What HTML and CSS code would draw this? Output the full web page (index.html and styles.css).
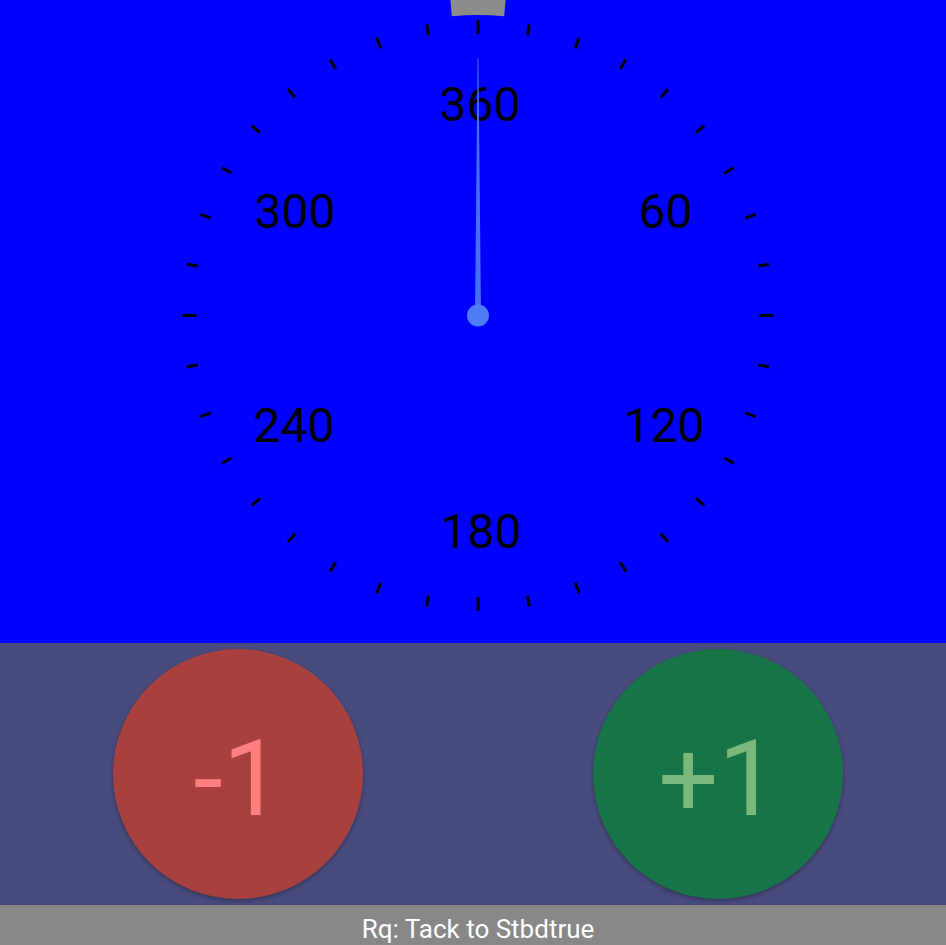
FILE: index.html
```html
<!DOCTYPE html>
<html>
<head>
<meta charset="utf-8">
<link rel="stylesheet" href="styles.css">
</head>
<body>
<div class="app">
  <div class="dial-area">
    <svg class="dial" width="946" height="643" viewBox="0 0 946 643">
      <path class="tab" d="M 451.85 16.14 A 300 300 0 0 1 504.15 16.14 L 508.5 -33.7 A 350 350 0 0 0 447.5 -33.7 Z"/>
      <g class="ticks">
        <line class="major" x1="478" y1="20" x2="478" y2="34" transform="rotate(0 478 315.5)"/>
        <line x1="478" y1="20" x2="478" y2="31" transform="rotate(10 478 315.5)"/>
        <line x1="478" y1="20" x2="478" y2="31" transform="rotate(20 478 315.5)"/>
        <line x1="478" y1="20" x2="478" y2="31" transform="rotate(30 478 315.5)"/>
        <line x1="478" y1="20" x2="478" y2="31" transform="rotate(40 478 315.5)"/>
        <line x1="478" y1="20" x2="478" y2="31" transform="rotate(50 478 315.5)"/>
        <line x1="478" y1="20" x2="478" y2="31" transform="rotate(60 478 315.5)"/>
        <line x1="478" y1="20" x2="478" y2="31" transform="rotate(70 478 315.5)"/>
        <line x1="478" y1="20" x2="478" y2="31" transform="rotate(80 478 315.5)"/>
        <line class="major" x1="478" y1="20" x2="478" y2="34" transform="rotate(90 478 315.5)"/>
        <line x1="478" y1="20" x2="478" y2="31" transform="rotate(100 478 315.5)"/>
        <line x1="478" y1="20" x2="478" y2="31" transform="rotate(110 478 315.5)"/>
        <line x1="478" y1="20" x2="478" y2="31" transform="rotate(120 478 315.5)"/>
        <line x1="478" y1="20" x2="478" y2="31" transform="rotate(130 478 315.5)"/>
        <line x1="478" y1="20" x2="478" y2="31" transform="rotate(140 478 315.5)"/>
        <line x1="478" y1="20" x2="478" y2="31" transform="rotate(150 478 315.5)"/>
        <line x1="478" y1="20" x2="478" y2="31" transform="rotate(160 478 315.5)"/>
        <line x1="478" y1="20" x2="478" y2="31" transform="rotate(170 478 315.5)"/>
        <line class="major" x1="478" y1="20" x2="478" y2="34" transform="rotate(180 478 315.5)"/>
        <line x1="478" y1="20" x2="478" y2="31" transform="rotate(190 478 315.5)"/>
        <line x1="478" y1="20" x2="478" y2="31" transform="rotate(200 478 315.5)"/>
        <line x1="478" y1="20" x2="478" y2="31" transform="rotate(210 478 315.5)"/>
        <line x1="478" y1="20" x2="478" y2="31" transform="rotate(220 478 315.5)"/>
        <line x1="478" y1="20" x2="478" y2="31" transform="rotate(230 478 315.5)"/>
        <line x1="478" y1="20" x2="478" y2="31" transform="rotate(240 478 315.5)"/>
        <line x1="478" y1="20" x2="478" y2="31" transform="rotate(250 478 315.5)"/>
        <line x1="478" y1="20" x2="478" y2="31" transform="rotate(260 478 315.5)"/>
        <line class="major" x1="478" y1="20" x2="478" y2="34" transform="rotate(270 478 315.5)"/>
        <line x1="478" y1="20" x2="478" y2="31" transform="rotate(280 478 315.5)"/>
        <line x1="478" y1="20" x2="478" y2="31" transform="rotate(290 478 315.5)"/>
        <line x1="478" y1="20" x2="478" y2="31" transform="rotate(300 478 315.5)"/>
        <line x1="478" y1="20" x2="478" y2="31" transform="rotate(310 478 315.5)"/>
        <line x1="478" y1="20" x2="478" y2="31" transform="rotate(320 478 315.5)"/>
        <line x1="478" y1="20" x2="478" y2="31" transform="rotate(330 478 315.5)"/>
        <line x1="478" y1="20" x2="478" y2="31" transform="rotate(340 478 315.5)"/>
        <line x1="478" y1="20" x2="478" y2="31" transform="rotate(350 478 315.5)"/>
      </g>
      <g class="labels">
        <text x="480" y="121">360</text>
        <text x="665.5" y="228">60</text>
        <text x="664" y="442">120</text>
        <text x="481" y="548">180</text>
        <text x="294" y="442">240</text>
        <text x="295" y="228">300</text>
      </g>
      <path class="needle" d="M 475 315.5 L 477.6 58 L 478.4 58 L 481 315.5 Z"/>
      <circle class="hub" cx="478" cy="315.5" r="11"/>
    </svg>
  </div>
  <div class="controls">
    <button class="round minus">-1</button>
    <button class="round plus">+1</button>
  </div>
  <div class="status">Rq: Tack to Stbdtrue</div>
</div>
</body>
</html>
```
FILE: styles.css
```css
html, body {
  margin: 0;
  padding: 0;
  width: 946px;
  height: 945px;
  overflow: hidden;
  font-family: Roboto, "Liberation Sans", sans-serif;
}

.app {
  display: flex;
  flex-direction: column;
  width: 946px;
  height: 945px;
}

.dial-area {
  height: 643px;
  background: #0000ff;
  flex: none;
}

.dial {
  display: block;
}

.tab {
  fill: #8c8c8c;
}

.ticks line {
  stroke: #000;
  stroke-width: 3;
}

.labels text {
  font-family: Roboto, "Liberation Sans", sans-serif;
  font-size: 48px;
  fill: #000;
  text-anchor: middle;
}

.needle {
  fill: #4d7cf5;
  opacity: 0.9;
}

.hub {
  fill: #4d7cf5;
}

.controls {
  height: 262px;
  flex: none;
  background: #474a7c;
  display: flex;
  align-items: center;
  padding-left: 113px;
  gap: 230px;
  box-sizing: border-box;
}

.round {
  width: 250px;
  height: 250px;
  border-radius: 50%;
  border: none;
  padding: 10px 0 0 0;
  margin: 0;
  font-family: Roboto, "Liberation Sans", sans-serif;
  font-size: 106px;
  line-height: 1;
  display: flex;
  align-items: center;
  justify-content: center;
  box-shadow: 0 2px 4px rgba(0, 0, 0, 0.3);
}

.minus {
  background: #a84040;
  color: #ff7f7f;
}

.plus {
  background: #177348;
  color: #7bb87b;
}

.status {
  flex: 1;
  background: #888888;
  color: #ffffff;
  font-size: 26px;
  text-align: center;
  padding: 10px 0 0 10px;
  box-sizing: border-box;
  line-height: 28px;
}
```
